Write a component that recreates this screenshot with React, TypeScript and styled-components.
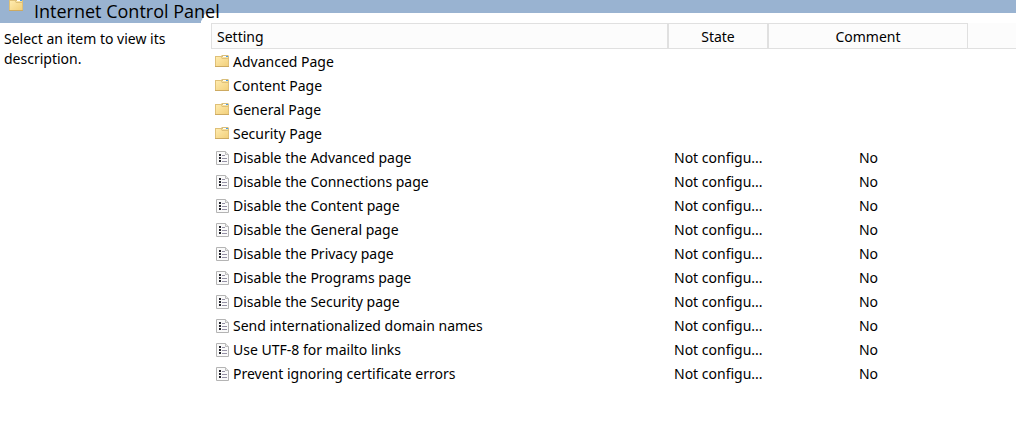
import React from "react";
import styled, { createGlobalStyle } from "styled-components";

const GlobalStyle = createGlobalStyle`
  * { box-sizing: border-box; }
  body {
    margin: 0;
    background: #fff;
    color: #000;
    font-family: "Segoe UI", "Noto Sans", sans-serif;
    font-size: 14px;
    line-height: 20px;
  }
`;

const Banner = styled.header`
  height: 23px;
  background: linear-gradient(to bottom, #99b3d1 13px, transparent 13px);
`;

const BannerTab = styled.div`
  position: relative;
  isolation: isolate;
  display: flex;
  gap: 11px;
  width: 206px;
  height: 23px;
  padding-left: 9px;

  &::before {
    content: "";
    position: absolute;
    inset: 0;
    z-index: -1;
    background: #99b3d1;
    clip-path: polygon(0 0, 206px 0, 206px 13px, 204px 15px, 203px 17px, 202px 20px, 201px 21px, 201px 23px, 0 23px);
  }
`;

const TabIcon = styled.span`
  flex: none;
  width: 14px;
  height: 14px;
  overflow: hidden;
  display: flex;
  align-items: flex-end;
`;

const Title = styled.h1`
  margin: 0;
  font-family: "Segoe UI", "Open Sans", sans-serif;
  font-size: 18px;
  font-weight: 400;
  line-height: 23px;
  white-space: nowrap;
`;

const Content = styled.main`
  display: grid;
  grid-template-columns: 211px minmax(0, 1fr);
`;

const Description = styled.p`
  margin: 0;
  padding: 6px 24px 0 4px;
`;

const Table = styled.table`
  width: 100%;
  table-layout: fixed;
  border-collapse: separate;
  border-spacing: 0;
`;

const HeadCell = styled.th<{ $width?: number; $align?: "left" | "center" }>`
  width: ${(p) => (p.$width ? `${p.$width}px` : "auto")};
  height: 26px;
  padding: 2px 5px 0;
  background: #fcfcfc;
  border: solid #e0e0e0;
  border-width: 1px 2px 1px 0;
  font-weight: 400;
  text-align: ${(p) => p.$align ?? "center"};

  &:first-child { border-left-width: 1px; }
  &:nth-child(3) { border-right-width: 1px; }
`;

const HeadFiller = styled.td`
  width: 48px;
  padding: 0;
  background: #fcfcfc;
  border-bottom: 1px solid #e0e0e0;
`;

const Body = styled.tbody`
  &::before {
    content: "";
    display: table-row;
    height: 1px;
  }
`;

const Cell = styled.td<{ $align?: "left" | "center" }>`
  height: 24px;
  padding: 0 4px;
  text-align: ${(p) => p.$align ?? "left"};
  white-space: nowrap;
`;

const StateCell = styled(Cell)`
  padding: 0 5px;
`;

const Name = styled.span`
  display: flex;
  align-items: center;
  gap: 4px;
`;

const Icon = styled.svg`
  display: block;
  flex: none;
  width: 14px;
  height: 16px;
`;

const FolderIcon = () => (
  <Icon viewBox="0 0 14 16" aria-hidden="true">
    <defs>
      <linearGradient id="folder" x1="0" y1="0" x2="1" y2="1">
        <stop offset="0" stopColor="#ffebae" />
        <stop offset="1" stopColor="#f2d07c" />
      </linearGradient>
    </defs>
    <path d="M6 3V2L7 1H13L14 2V5H6z" fill="#d9bf7c" />
    <path d="M8 2h4v1H8z" fill="#fff" />
    <path d="M11 2h2v1h-2z" fill="#4a9be8" />
    <path d="M7 3h6v1H7z" fill="#f8e2a0" />
    <path d="M0 2H6L7 4H14V13H0z" fill="#dfc078" />
    <path d="M1 3H6L7 5H13V12H1z" fill="url(#folder)" />
    <path d="M0 12h14v1H0z" fill="#cdaa61" />
  </Icon>
);

const SettingIcon = () => (
  <Icon viewBox="0 0 14 16" aria-hidden="true">
    <path d="M1.5 1.5H10.5L13.5 4.5V14.5H1.5z" fill="#fafafa" stroke="#b4b4b4" />
    <path d="M10.5 1.5V4.5H13.5" fill="#e8e8e8" stroke="#bdbdbd" />
    <path d="M4 4h2v2H4zM4 7h2v2H4zM4 10h2v2H4z" fill="#24242c" />
    <path d="M7 5.5H10M7 8.5H12M7 11.5H12" stroke="#9490a4" />
  </Icon>
);

const folders = ["Advanced Page", "Content Page", "General Page", "Security Page"];

const settings = [
  "Disable the Advanced page",
  "Disable the Connections page",
  "Disable the Content page",
  "Disable the General page",
  "Disable the Privacy page",
  "Disable the Programs page",
  "Disable the Security page",
  "Send internationalized domain names",
  "Use UTF-8 for mailto links",
  "Prevent ignoring certificate errors",
];

export default function App() {
  return (
    <>
      <GlobalStyle />
      <Banner>
        <BannerTab>
          <TabIcon><FolderIcon /></TabIcon>
          <Title>Internet Control Panel</Title>
        </BannerTab>
      </Banner>
      <Content>
        <Description>Select an item to view its description.</Description>
        <Table>
          <thead>
            <tr>
              <HeadCell scope="col" $align="left">Setting</HeadCell>
              <HeadCell scope="col" $width={100}>State</HeadCell>
              <HeadCell scope="col" $width={199}>Comment</HeadCell>
              <HeadFiller />
            </tr>
          </thead>
          <Body>
            {folders.map((name) => (
              <tr key={name}>
                <Cell><Name><FolderIcon />{name}</Name></Cell>
                <StateCell />
                <Cell />
                <Cell />
              </tr>
            ))}
            {settings.map((name) => (
              <tr key={name}>
                <Cell><Name><SettingIcon />{name}</Name></Cell>
                <StateCell>Not configu...</StateCell>
                <Cell $align="center">No</Cell>
                <Cell />
              </tr>
            ))}
          </Body>
        </Table>
      </Content>
    </>
  );
}
